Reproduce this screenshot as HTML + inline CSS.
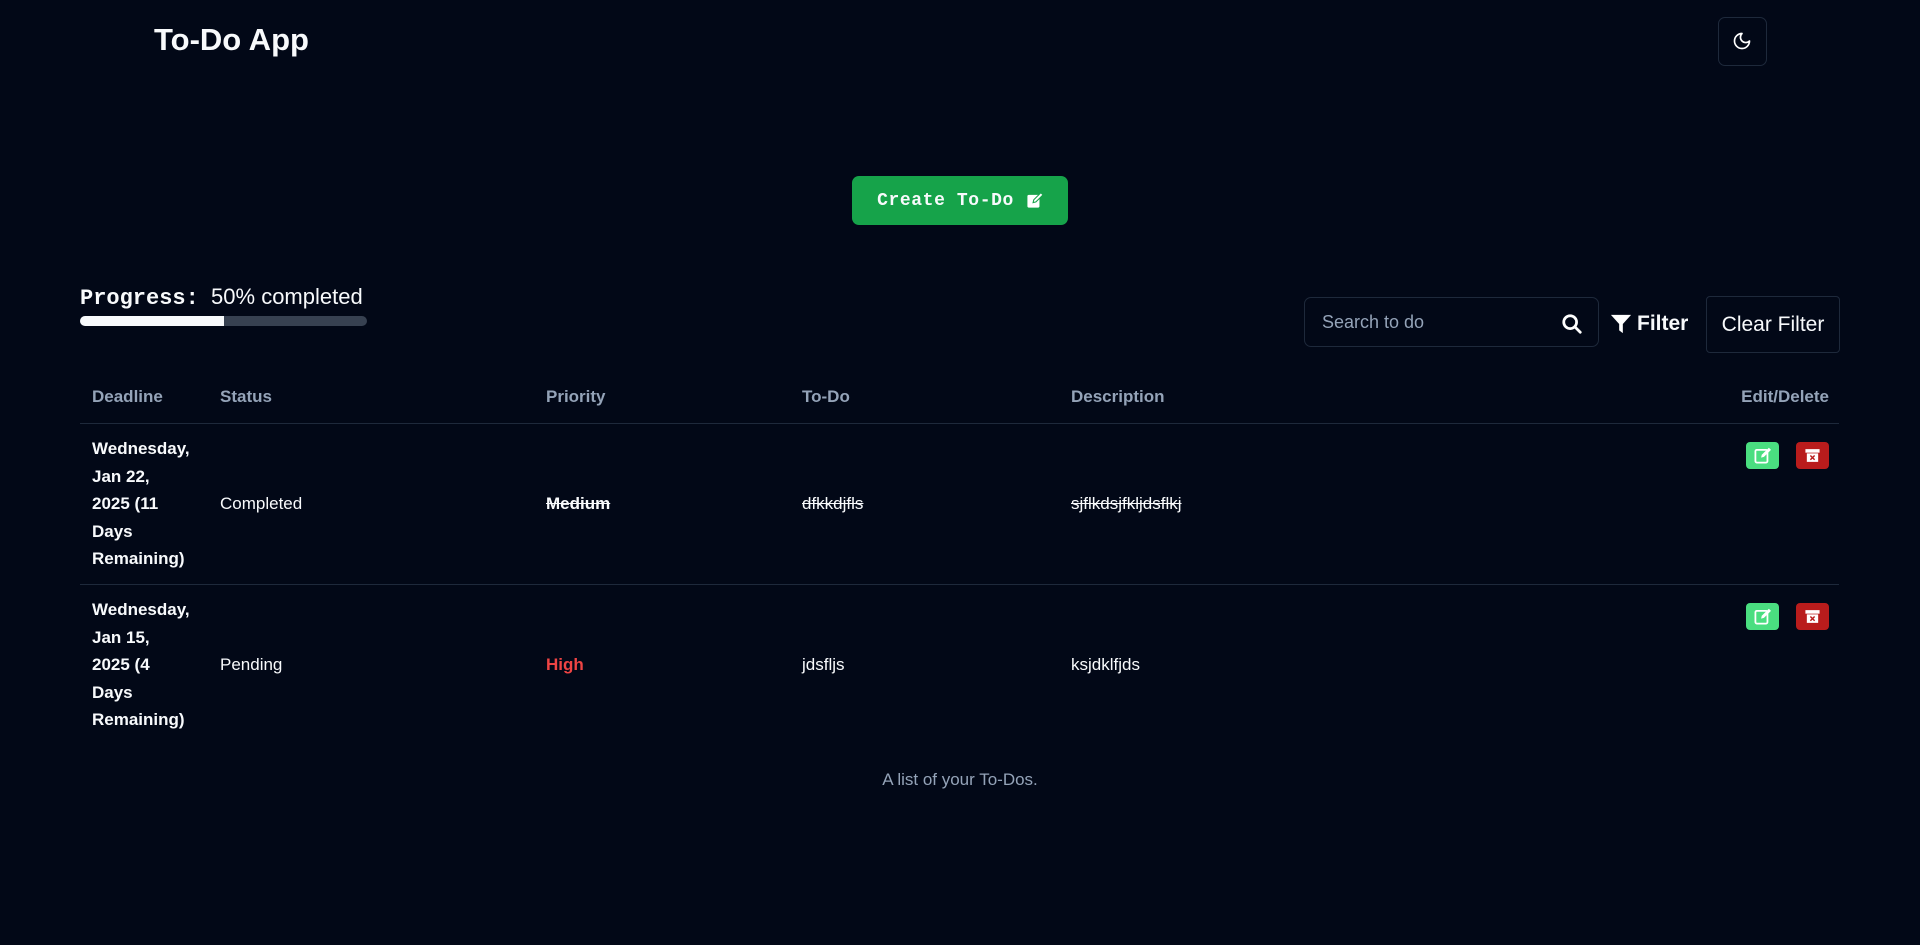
<!DOCTYPE html>
<html><head><meta charset="utf-8"><style>
*{box-sizing:border-box;margin:0;padding:0}
body{width:1920px;height:945px;background:#020817;color:#f8fafc;font-family:"Liberation Sans",sans-serif;position:relative;overflow:hidden}
.a{position:absolute}
.mono{font-family:"Liberation Mono",monospace}
.th{color:#94a3b8;font-size:17px;font-weight:bold;top:387px}
.cell{font-size:17px;line-height:27.5px}
.hr{left:80px;width:1759px;height:1px;background:#1e293b}
.btn{width:33px;height:27px;border-radius:4px}
.strike{text-decoration:line-through}
</style></head><body>
<div class="a" style="left:154px;top:22px;font-size:31px;font-weight:bold">To-Do App</div>
<div class="a" style="left:1718px;top:17px;width:49px;height:49px;border:1px solid #1e293b;border-radius:7px"></div>
<svg class="a" style="left:1732px;top:31px" width="20" height="20" viewBox="0 0 24 24" fill="none" stroke="#fff" stroke-width="2" stroke-linecap="round" stroke-linejoin="round"><path d="M12 3a6 6 0 0 0 9 9 9 9 0 1 1-9-9Z"/></svg>

<div class="a mono" style="left:852px;top:176px;width:216px;height:49px;background:#16a34a;border-radius:7px;font-weight:bold;font-size:18px;display:flex;align-items:center;justify-content:center;gap:12px;letter-spacing:0.6px">Create To-Do
<svg width="17" height="17" viewBox="0 0 24 24"><rect x="2" y="4" width="17" height="18" rx="2" fill="#fff"/><path d="M10 15l1-4L21 1l3 3-10 10z" fill="#fff" stroke="#16a34a" stroke-width="1.5"/></svg></div>

<div class="a" style="left:80px;top:284px;font-size:22px"><span class="mono" style="font-weight:bold">Progress:</span>&nbsp; 50% completed</div>
<div class="a" style="left:80px;top:316px;width:287px;height:10px;border-radius:5px;background:#374151;overflow:hidden"><div style="width:144px;height:10px;background:#f8fafc"></div></div>

<div class="a" style="left:1304px;top:297px;width:295px;height:50px;border:1px solid #1e293b;border-radius:7px"></div>
<div class="a" style="left:1322px;top:312px;font-size:18px;color:#94a3b8">Search to do</div>
<svg class="a" style="left:1561px;top:313px" width="22" height="22" viewBox="0 0 24 24" fill="none" stroke="#fff" stroke-width="3" stroke-linecap="round"><circle cx="10" cy="10" r="7"/><path d="M15 15l6 6"/></svg>
<svg class="a" style="left:1610px;top:313px" width="22" height="22" viewBox="0 0 24 24"><path d="M1 2h22l-9 10v10l-4-3v-7z" fill="#fff"/></svg>
<div class="a" style="left:1637px;top:312px;font-size:21px;font-weight:bold">Filter</div>
<div class="a" style="left:1706px;top:296px;width:134px;height:57px;border:1px solid #1e293b;border-radius:4px;font-size:21px;display:flex;align-items:center;justify-content:center">Clear Filter</div>

<div class="a th" style="left:92px">Deadline</div>
<div class="a th" style="left:220px">Status</div>
<div class="a th" style="left:546px">Priority</div>
<div class="a th" style="left:802px">To-Do</div>
<div class="a th" style="left:1071px">Description</div>
<div class="a th" style="right:91px">Edit/Delete</div>
<div class="a hr" style="top:423px"></div>

<div class="a cell" style="left:92px;top:435px;font-weight:bold;width:120px">Wednesday,<br>Jan 22,<br>2025 (11<br>Days<br>Remaining)</div>
<div class="a cell" style="left:220px;top:490px">Completed</div>
<div class="a cell strike" style="left:546px;top:490px;font-weight:bold">Medium</div>
<div class="a cell strike" style="left:802px;top:490px">dfkkdjfls</div>
<div class="a cell strike" style="left:1071px;top:490px">sjflkdsjfkljdsflkj</div>
<div class="a hr" style="top:584px"></div>

<div class="a cell" style="left:92px;top:596px;font-weight:bold;width:120px">Wednesday,<br>Jan 15,<br>2025 (4<br>Days<br>Remaining)</div>
<div class="a cell" style="left:220px;top:651px">Pending</div>
<div class="a cell" style="left:546px;top:651px;font-weight:bold;color:#ef4444">High</div>
<div class="a cell" style="left:802px;top:651px">jdsfljs</div>
<div class="a cell" style="left:1071px;top:651px">ksjdklfjds</div>

<div class="a" style="left:0;top:770px;width:1920px;text-align:center;font-size:17px;color:#94a3b8">A list of your To-Dos.</div>

<div class="a btn" style="left:1746px;top:442px;background:#4ade80"></div>
<div class="a btn" style="left:1796px;top:442px;background:#b91c1c"></div>
<div class="a btn" style="left:1746px;top:603px;background:#4ade80"></div>
<div class="a btn" style="left:1796px;top:603px;background:#b91c1c"></div>
<svg class="a" style="left:1754px;top:447px" width="17" height="17" viewBox="0 0 24 24"><rect x="2" y="4" width="17" height="18" rx="2" fill="none" stroke="#fff" stroke-width="2.5"/><path d="M10 15l1-4L21 1l3 3-10 10z" fill="#fff"/></svg>
<svg class="a" style="left:1754px;top:608px" width="17" height="17" viewBox="0 0 24 24"><rect x="2" y="4" width="17" height="18" rx="2" fill="none" stroke="#fff" stroke-width="2.5"/><path d="M10 15l1-4L21 1l3 3-10 10z" fill="#fff"/></svg>
<svg class="a" style="left:1804px;top:447px" width="17" height="17" viewBox="0 0 24 24"><rect x="2" y="3" width="20" height="5" fill="#fff"/><rect x="4" y="9" width="16" height="12" fill="#fff"/><path d="M9 12l6 6M15 12l-6 6" stroke="#b91c1c" stroke-width="2"/></svg>
<svg class="a" style="left:1804px;top:608px" width="17" height="17" viewBox="0 0 24 24"><rect x="2" y="3" width="20" height="5" fill="#fff"/><rect x="4" y="9" width="16" height="12" fill="#fff"/><path d="M9 12l6 6M15 12l-6 6" stroke="#b91c1c" stroke-width="2"/></svg>
</body></html>
